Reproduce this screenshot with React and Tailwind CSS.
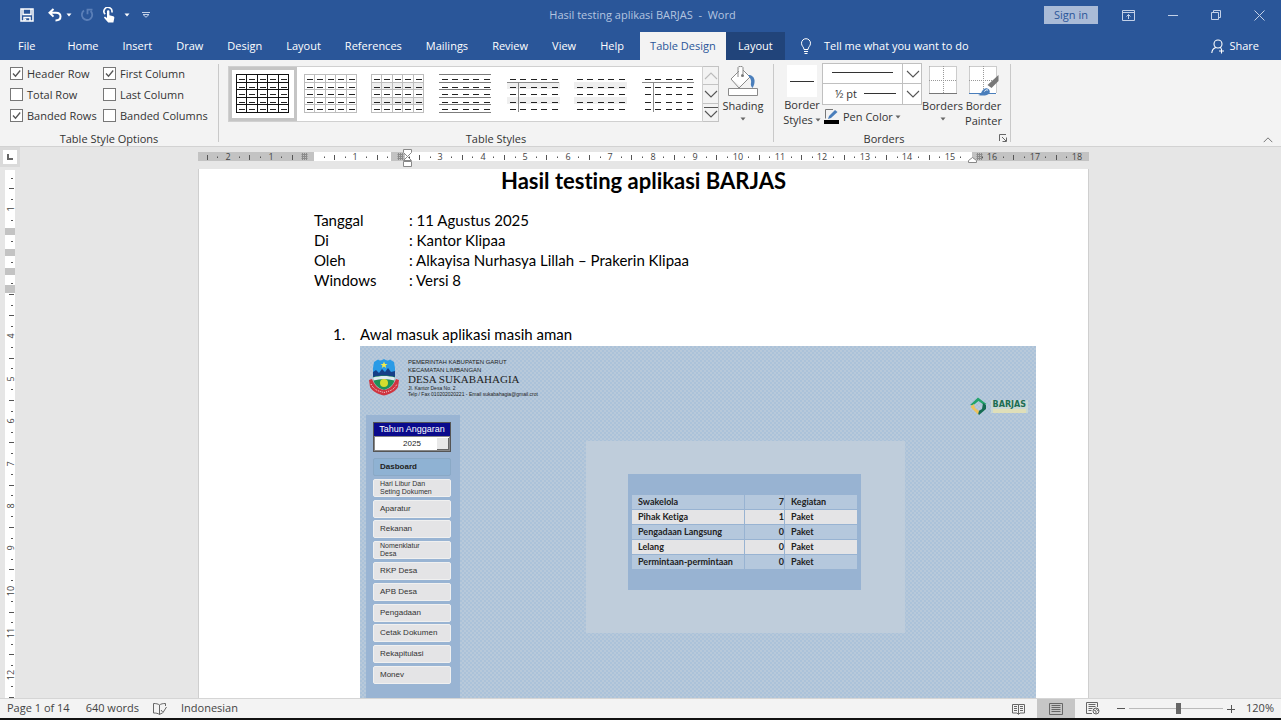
import { useState } from 'react'
import clsx from 'clsx'

const tabs = ['Home', 'Insert', 'Draw', 'Design', 'Layout', 'References', 'Mailings', 'Review', 'View', 'Help']

const styleOptions = [
  { name: 'Header Row', checked: true },
  { name: 'First Column', checked: true },
  { name: 'Total Row', checked: false },
  { name: 'Last Column', checked: false },
  { name: 'Banded Rows', checked: true },
  { name: 'Banded Columns', checked: false },
]

const tableStyles = [
  { name: 'Table Grid', grid: '#111111' },
  { name: 'Table Grid Light', grid: '#bdbdbd' },
  { name: 'Grid Table 1 Light', grid: '#bdbdbd', banded: true },
  { name: 'Plain Table 2', rules: true },
  { name: 'Plain Table 3', banded: true, firstColumn: true },
  { name: 'Plain Table 4', banded: true },
  { name: 'Plain Table 5', firstColumn: true },
]

const details = [
  { label: 'Tanggal', value: '11 Agustus 2025' },
  { label: 'Di', value: 'Kantor Klipaa' },
  { label: 'Oleh', value: 'Alkayisa Nurhasya Lillah – Prakerin Klipaa' },
  { label: 'Windows', value: 'Versi 8' },
]

const menu = [
  { name: 'Hari Libur Dan\nSeting Dokumen', small: true },
  { name: 'Aparatur' },
  { name: 'Rekanan' },
  { name: 'Nomenklatur\nDesa', small: true },
  { name: 'RKP Desa' },
  { name: 'APB Desa' },
  { name: 'Pengadaan' },
  { name: 'Cetak Dokumen' },
  { name: 'Rekapitulasi' },
  { name: 'Monev' },
]

const summary = [
  { name: 'Swakelola', count: 7, unit: 'Kegiatan' },
  { name: 'Pihak Ketiga', count: 1, unit: 'Paket' },
  { name: 'Pengadaan Langsung', count: 0, unit: 'Paket' },
  { name: 'Lelang', count: 0, unit: 'Paket' },
  { name: 'Permintaan-permintaan', count: 0, unit: 'Paket' },
]

function Caret({ className }) {
  return (
    <svg viewBox="0 0 6 4" className={clsx('h-1 w-1.5', className)} fill="currentColor">
      <path d="M0.5 0.5h5L3 3.5z" />
    </svg>
  )
}

function Chevron({ up, className }) {
  return (
    <svg viewBox="0 0 14 8" className={clsx('h-2', className || 'w-3.5')} fill="none" stroke="currentColor" strokeWidth="1.1">
      <path d={up ? 'M1 7l6-6 6 6' : 'M1 1l6 6 6-6'} />
    </svg>
  )
}

function TitleBar() {
  return (
    <header className="flex h-[30px] shrink-0 items-center text-[#dbe5f3]">
      <div className="flex flex-1 items-center pl-5">
        <button type="button" aria-label="Save">
          <svg viewBox="0 0 14 14" className="h-3.5 w-3.5" fill="none" stroke="#fff" strokeWidth="1.5">
            <path d="M1 1h12v12H1z" />
            <path d="M3 1v5.500h8V1M4 13V9.5h6V13" />
            <path d="M5.5 10.5v2" />
          </svg>
        </button>
        <button type="button" aria-label="Undo" className="ml-3.5 flex items-center gap-1">
          <svg viewBox="0 0 14 14" className="h-3.5 w-3.5" fill="none" stroke="#fff" strokeWidth="2">
            <path d="M5.5 1L1.5 4.8l4 3.8M1.8 4.8H8c3 0 4.5 1.7 4.5 3.8S11 12.5 7.5 12.5" />
          </svg>
          <Caret className="text-white" />
        </button>
        <button type="button" aria-label="Repeat" className="ml-2">
          <svg viewBox="0 0 14 14" className="h-3.5 w-3.5" fill="none" stroke="#5b7fb8" strokeWidth="1.8">
            <path d="M4 2.6A5.2 5.2 0 1 0 10.6 3M7.5 6.2V1.6h5" />
          </svg>
        </button>
        <button type="button" aria-label="Touch mode" className="ml-2 flex items-center gap-2">
          <svg viewBox="0 0 14 16" className="h-4 w-3.5" fill="#fff">
            <path d="M3.2 7.2A4 4 0 1 1 9.8 5.5" fill="none" stroke="#fff" strokeWidth="1.600" />
            <path d="M5 4.3c0-1.500 2.400-1.500 2.400 0v4l3.8 1c.9.3 1.3.9 1.1 1.8L11.4 15.500H6.2L2.2 11c-.6-1 .6-1.700 1.400-1.100L5 11z" />
          </svg>
          <Caret className="text-white" />
        </button>
        <button type="button" aria-label="Customize Quick Access Toolbar" className="ml-3">
          <svg viewBox="0 0 8 6" className="h-1.5 w-2" fill="none" stroke="#c3d1e8">
            <path d="M0 .5h8M1 2.5h6L4 5.3z" />
          </svg>
        </button>
      </div>
      <p className="whitespace-pre text-[11px] text-[#b4c5e0]">Hasil testing aplikasi BARJAS  -  Word</p>
      <div className="flex flex-1 items-center justify-end pr-4">
        <button type="button" className="h-[18px] w-[54px] bg-[#aabbd7] text-[11px] leading-4 text-[#2a5699]">
          Sign in
        </button>
        <button type="button" aria-label="Ribbon Display Options" className="ml-6">
          <svg viewBox="0 0 13 11" className="h-[11px] w-[13px]" fill="none" stroke="#c3d1e8">
            <path d="M.5.5h12v10H.5zM.5 2.5h12M6.5 9V4.5M4.5 6.5l2-2 2 2" />
          </svg>
        </button>
        <button type="button" aria-label="Minimize" className="ml-[33px]">
          <svg viewBox="0 0 10 10" className="h-2.5 w-2.5" stroke="#c3d1e8">
            <path d="M0 5.5h10" />
          </svg>
        </button>
        <button type="button" aria-label="Restore" className="ml-[33px]">
          <svg viewBox="0 0 10 10" className="h-2.5 w-2.5" fill="none" stroke="#c3d1e8">
            <path d="M.5 2.5h7v7h-7zM2.5 2.5v-2h7v7h-2" />
          </svg>
        </button>
        <button type="button" aria-label="Close" className="ml-[33px]">
          <svg viewBox="0 0 11 11" className="h-[11px] w-[11px]" stroke="#c3d1e8">
            <path d="M.5.5l10 10M10.5.5l-10 10" />
          </svg>
        </button>
      </div>
    </header>
  )
}

function TabBar() {
  return (
    <nav className="flex h-[30px] shrink-0 items-end text-[11px] text-white">
      <div className="flex h-7 items-stretch">
        <button type="button" className="mr-2 pl-[18px] pr-3">File</button>
        {tabs.map((tab) => (
          <button key={tab} type="button" className="px-3">{tab}</button>
        ))}
        <button type="button" className="ml-1 w-[86px] bg-[#f3f3f3] text-[#2a5699]">Table Design</button>
        <button type="button" className="w-[59px] bg-[#21447a]">Layout</button>
        <button type="button" className="ml-[15px] flex items-center gap-3">
          <svg viewBox="0 0 12 16" className="h-4 w-3" fill="none" stroke="#fff">
            <path d="M4 11.5C4 9 1.5 8.300 1.500 5.200a4.500 4.500 0 0 1 9 0C10.500 8.300 8 9 8 11.500zM4 13.500h4M4.500 15.500h3" />
          </svg>
          Tell me what you want to do
        </button>
      </div>
      <button type="button" className="ml-auto mr-[22px] flex h-7 items-center gap-1">
        <svg viewBox="0 0 14 15" className="h-[15px] w-3.5" fill="none" stroke="#fff" strokeWidth="1.1">
          <circle cx="7" cy="5" r="4" />
          <path d="M.8 14C1 11 2.500 9.200 5 8.500M9 8.500l1.200.8M10.500 9.500v5M8 12h5" />
        </svg>
        Share
      </button>
    </nav>
  )
}

function StyleOption({ option }) {
  return (
    <label className="flex items-center gap-1">
      <span className="relative flex h-[13px] w-[13px]">
        <input
          type="checkbox"
          defaultChecked={option.checked}
          className="peer h-[13px] w-[13px] appearance-none border border-[#777] bg-white"
        />
        <svg
          viewBox="0 0 13 13"
          className="pointer-events-none invisible absolute inset-0 peer-checked:visible"
          fill="none"
          stroke="#555"
          strokeWidth="1.3"
        >
          <path d="M3 6.500l2.500 2.700L10.200 3.500" />
        </svg>
      </span>
      {option.name}
    </label>
  )
}

function TableThumb({ style }) {
  const steps = [0, 1, 2, 3, 4]
  const lines = [0, 1, 2, 3, 4, 5]
  return (
    <svg viewBox="0 0 53 39" className="h-[39px] w-[53px]" shapeRendering="crispEdges">
      {style.banded && <path d="M0 8h53v7H0zM0 23h53v7H0z" fill="#efefef" />}
      {style.grid && (
        <g stroke={style.grid} fill="none">
          {lines.map((i) => <path key={i} d={`M0 ${Math.round(i * 7.6) + 0.5}h53`} />)}
          {lines.map((i) => <path key={i} d={`M${Math.round(i * 10.4) + 0.5} 0v39`} />)}
        </g>
      )}
      {style.rules && (
        <g stroke="#7c7c7c">
          {lines.map((i) => <path key={i} d={`M0 ${Math.round(i * 7.6) + 0.5}h52`} />)}
        </g>
      )}
      {style.firstColumn && <path d="M0 8.500h52M11.500 8v30" stroke="#8a8a8a" />}
      <g stroke="#222">
        {steps.map((row) => steps.map((col) => (
          <path key={`${row}-${col}`} d={`M${Math.round(col * 10.4) + 3} ${Math.round(row * 7.5) + 5}.5h6`} />
        )))}
      </g>
    </svg>
  )
}

function Group({ label, className, children }) {
  return (
    <section className={clsx('relative flex flex-col justify-between', className)}>
      {children}
      <h2 className="text-center leading-[15px]">{label}</h2>
    </section>
  )
}

function Divider() {
  return <div className="mt-1 mb-1 w-px shrink-0 bg-[#c9c9c9]" />
}

function Ribbon() {
  const [selected, setSelected] = useState('Table Grid')

  return (
    <div className="flex h-[87px] shrink-0 border-b border-[#d2d2d2] bg-[#f3f3f3] text-[11px] text-[#333]">
      <Group label="Table Style Options" className="w-[218px]">
        <div className="grid grid-cols-[93px_1fr] pt-[3px] pl-2.5 leading-[21px] whitespace-nowrap">
          {styleOptions.map((option) => <StyleOption key={option.name} option={option} />)}
        </div>
      </Group>
      <Divider />

      <Group label="Table Styles" className="w-[554px]">
        <div className="flex pt-1.5 pl-[9px]">
          <div className="flex h-14 w-[475px] border border-[#d0d0d0] bg-white">
            {tableStyles.map((style) => (
              <button
                key={style.name}
                type="button"
                aria-label={style.name}
                onClick={() => setSelected(style.name)}
                className={clsx(
                  'flex flex-1 items-start justify-center border-[3px] pt-1',
                  selected === style.name ? 'border-[#c5c5c5]' : 'border-transparent'
                )}
              >
                <TableThumb style={style} />
              </button>
            ))}
          </div>
          <div className="flex h-14 w-4 flex-col border border-l-0 border-[#c3c3c3]">
            <button type="button" aria-label="Previous row" className="flex flex-1 items-center justify-center border-b border-[#c3c3c3] text-[#bbb]">
              <Chevron up />
            </button>
            <button type="button" aria-label="Next row" className="flex flex-1 items-center justify-center border-b border-[#c3c3c3] text-[#555]">
              <Chevron />
            </button>
            <button type="button" aria-label="More" className="flex flex-1 flex-col items-center justify-center gap-0.5 text-[#555]">
              <span className="h-px w-3.5 bg-[#555]" />
              <Chevron />
            </button>
          </div>
          <button type="button" className="flex w-12 flex-col items-center leading-[15px]">
            <svg viewBox="0 0 32 32" className="h-8 w-8" fill="none" stroke="#8a8a8a">
              <path d="M14 1l9 9-9 10L4 13z" fill="#fff" stroke="none" />
              <path d="M11 11V1.500c0-1.600 5-1.600 5 0V8M12 5L4 13l8 9L23 11 16 4" />
              <circle cx="15.500" cy="9.500" r="1.500" fill="#777" stroke="none" />
              <path d="M21 9c4 0 6 2 6.500 5 .3 3-.3 5-2 8-1.500-2-2-3-1.500-5s0-4-3-8z" fill="#4a7ebb" stroke="none" />
              <path d="M1.500 22.500h29v7h-29z" fill="#fff" />
            </svg>
            Shading
            <Caret className="mt-1 text-[#666]" />
          </button>
        </div>
      </Group>
      <Divider />

      <Group label="Borders" className="w-[236px] pr-4">
        <div className="-mr-4 flex pt-1 pl-2">
          <button type="button" className="flex w-10 flex-col items-center pt-px leading-[15px]">
            <span className="flex h-8 w-[30px] items-center bg-white px-[3px]">
              <span className="h-px flex-1 bg-[#333]" />
            </span>
            Border
            <span className="flex items-center gap-0.5">Styles <Caret className="text-[#666]" /></span>
          </button>
          <div className="-mt-px flex w-[100px] flex-col text-[#555]">
            <div className="relative">
              <select aria-label="Line Style" className="block h-[21px] w-full appearance-none border border-[#c0c0c0] bg-white">
                <option aria-label="Single line" />
              </select>
              <span className="pointer-events-none absolute top-[9px] left-2.5 h-px w-[61px] bg-[#333]" />
              <span className="pointer-events-none absolute inset-y-0 right-0 flex w-5 items-center justify-center border-l border-[#c0c0c0]">
                <Chevron />
              </span>
            </div>
            <div className="relative -mt-px">
              <select aria-label="Line Weight" className="block h-[22px] w-full appearance-none border border-[#c0c0c0] bg-white pl-3 text-[#333]">
                <option>½ pt</option>
              </select>
              <span className="pointer-events-none absolute top-2.5 left-[42px] h-px w-8 bg-[#333]" />
              <span className="pointer-events-none absolute inset-y-0 right-0 flex w-5 items-center justify-center border-l border-[#c0c0c0]">
                <Chevron />
              </span>
            </div>
            <button type="button" className="mt-1 flex items-center gap-1 pl-0.5 leading-[15px] whitespace-nowrap text-[#333]">
              <svg viewBox="0 0 15 15" className="h-[15px] w-[15px]">
                <path d="M9 .500H1.500v9" fill="none" stroke="#777" />
                <path d="M4 10l1-3 6-6 2.500 2-6.500 6z" fill="#4a7ebb" />
                <path d="M0 11h15v4H0z" fill="#000" />
              </svg>
              <span className="flex items-center gap-0.5">Pen Color <Caret className="text-[#666]" /></span>
            </button>
          </div>
          <button type="button" className="flex w-[41px] flex-col items-center pt-0.5 leading-[15px]">
            <svg viewBox="0 0 28 28" className="mb-1 h-7 w-7">
              <path d="M0 0h28v28H0z" fill="#fff" />
              <path d="M.5.5h27v27M.5.5v27M14.500 0v27M0 14.500h28" fill="none" stroke="#999" strokeDasharray="1 1" />
              <path d="M0 27.500h28" stroke="#777" />
            </svg>
            Borders
            <Caret className="mt-1 text-[#666]" />
          </button>
          <button type="button" className="flex w-[41px] flex-col items-center pt-0.5 leading-[15px]">
            <svg viewBox="0 0 30 30" className="mb-0.5 h-[30px] w-[30px]">
              <path d="M0 0h28v28H0z" fill="#fff" />
              <path d="M.5.5h27v27M.5.5v27M14.500 0v27M0 14.500h28" fill="none" stroke="#999" strokeDasharray="1 1" />
              <path d="M0 27.500h27" stroke="#4a7ebb" />
              <path d="M29.500 9v6l-7 7-4-3z" fill="#777" />
              <path d="M9 29c4-1 3-4 6-6 3-2 7 1 5.500 4-2 3-7 3-11.500 2z" fill="#4a7ebb" />
              <path d="M15.500 25.500c1-2 3-2 3.500-1" fill="none" stroke="#fff" />
            </svg>
            Border
            <br />
            Painter
          </button>
        </div>
        <button type="button" aria-label="Borders and Shading" className="absolute right-[3px] bottom-1">
          <svg viewBox="0 0 8 8" className="h-2 w-2" fill="none" stroke="#666">
            <path d="M.5 7V.5H7M3 3l4 4M7.500 3.500v4h-4" />
          </svg>
        </button>
      </Group>
      <Divider />

      <button type="button" aria-label="Collapse the Ribbon" className="mt-auto mr-2 mb-0.5 ml-auto text-[#555]">
        <Chevron up className="w-2.5" />
      </button>
    </div>
  )
}

// One centimetre is about 42.4 units on both rulers, numbered from the page margin.
function HorizontalRuler() {
  const quarters = Array.from({ length: 84 }, (_, i) => i - 11)
  const at = (cm) => Math.round(116 + cm * 42.45)
  const covered = (x) => (x > 103 && x < 117) || (x > 194 && x < 212) || (x > 770 && x < 785)
  return (
    <svg viewBox="1 -1 891 20" className="h-5 w-full shrink-0" preserveAspectRatio="xMinYMin">
      <path d="M0 4h892v9H0z" fill="#fff" />
      <path d="M0 4h117v9H0zM194 4h14v9h-14zM775 4h117v9H775z" fill="#c3c3c3" />
      {quarters.map((q) => {
        const cm = q / 4
        const x = at(cm)
        if (x > 890 || covered(x)) return null
        if (q % 4 === 0) {
          return (
            <text key={q} x={x} y="12" textAnchor="middle" fontSize="9" fill="#444">{Math.abs(cm)}</text>
          )
        }
        return <path key={q} d={q % 2 === 0 ? `M${x}.5 7v5` : `M${x}.5 8.500v1.500`} stroke="#555" />
      })}
      {[105, 201, 780].map((x) => (
        <path key={x} d={`M${x}.5 5v7m2-7v7m2-7v7M${x - 0.5} 6.500h6m-6 2h6m-6 2h6`} stroke="#8a8a8a" />
      ))}
      <path d="M206.500 1.500h8v3l-4 4-4-4zM210.500 8.500l4 4h-8zM206.500 13.500h8v5h-8z" fill="#fff" stroke="#888" />
      <path d="M775.500 9.500l4 3v2h-8v-2z" fill="#fff" stroke="#888" />
    </svg>
  )
}

function VerticalRuler() {
  const quarters = Array.from({ length: 50 }, (_, i) => i + 1)
  const covered = [[58, 7], [79, 7], [98, 7], [115, 8]]
  return (
    <svg viewBox="0 0 10 528" className="h-[528px] w-2.5 overflow-visible">
      <path d="M0 0h10v528H0z" fill="#fff" />
      {quarters.map((q) => {
        const y = Math.round(-3 + q * 10.590)
        if (q === 8) return null
        if (q % 4 === 0 && q !== 12) {
          return (
            <text key={q} transform={`translate(9 ${y}) rotate(-90)`} textAnchor="middle" fontSize="9" fill="#444">{q / 4}</text>
          )
        }
        return <path key={q} d={q % 2 === 0 ? `M4 ${y}.5h5` : `M6 ${y}.5h2`} stroke="#555" />
      })}
      {covered.map(([y, h]) => <path key={y} d={`M0 ${y}h10v${h}H0z`} fill="#c3c3c3" />)}
    </svg>
  )
}

function VillageCrest() {
  return (
    <svg viewBox="0 0 32 38" className="h-[38px] w-8">
      <path d="M6 4l4-2.500c2 1.500 4 1 6-.5 2 1.500 4 2 6 .5L26 4l1 6v10H5V10z" fill="#2a9be6" />
      <path d="M5 14l3-2 3 3 3-4 3 3 3-4 3 4 4-1v7H5z" fill="#153f86" />
      <path d="M5 19c7-2 15-2 22 0 0 6-4 11-11 13C9 30 5 25 5 19z" fill="#1f9158" />
      <path d="M5 19.500c7-2 15-2 22 0l-.5 3c-7-2-14-2-21 0z" fill="#dfeaf0" />
      <circle cx="16" cy="25" r="4" fill="#d3dd2e" />
      <path d="M16 3.500l1 2.500h2.500l-2 1.500.700 2.500-2.200-1.500-2.200 1.500.7-2.500-2-1.500H15z" fill="#f4ec4a" />
      <path d="M1 22l3-1c3 7 6 10 12 11 6-1 9-4 12-11l3 1-1 7c-3 5-8 7-14 8.500C10 36 5 34 2 29z" fill="#cf3540" />
      <path d="M3 26c3 6 7 7 13 8.500 6-1.500 10-2.500 13-8.500" fill="none" stroke="#f3d7d9" strokeDasharray="1 1" />
    </svg>
  )
}

function BarjasLogo() {
  return (
    <div className="flex items-center gap-1">
      <svg viewBox="0 0 18 18" className="h-[18px] w-[18px]">
        <path d="M1 8l8-7.500L17.500 7 15 8 9.500 4 4 8.500z" fill="#23a36c" />
        <path d="M14 6l3 2v4l-7 6-2-3 5-3z" fill="#156b52" />
        <path d="M2 9l3-2 1 4 4 3-1 3.500-7-7z" fill="#ecc35f" />
      </svg>
      <div className="bg-[#c8d8d5] px-0.5">
        <p className="font-['DejaVu_Sans',sans-serif] text-[8px] leading-[9px] font-bold text-[#1c6d52]">BARJAS</p>
        <div className="h-1 bg-[#dfdfb9]" />
      </div>
    </div>
  )
}

function VillageApp() {
  return (
    <div className="flex h-[376px] shrink-0 flex-col bg-[repeating-conic-gradient(#abc2d9_0%_25%,#b8c9da_0%_50%)] bg-[length:4px_4px] font-['Liberation_Sans',sans-serif] text-[#222]">
      <div className="flex h-[69px] shrink-0 justify-between pr-2 pl-2">
        <div className="flex gap-2 pt-3">
          <VillageCrest />
          <div className="text-[6px] leading-[8px]">
            <p>PEMERINTAH KABUPATEN GARUT</p>
            <p>KECAMATAN LIMBANGAN</p>
            <p className="font-['Liberation_Serif',serif] text-[11px] leading-[11px]">DESA SUKABAHAGIA</p>
            <p className="text-[5px] leading-[6px]">Jl. Kantor Desa No. 2</p>
            <p className="text-[5px] leading-[6px]">Telp / Fax 010202020221 - Email sukabahagia@gmail.crot</p>
          </div>
        </div>
        <div className="self-end">
          <BarjasLogo />
        </div>
      </div>

      <div className="flex min-h-0 flex-1">
        <aside className="ml-1.5 w-[94px] shrink-0 bg-[#99b4d3] pt-[7px] pr-[9px] pl-[7px]">
          <div className="border border-[#555] bg-white text-center">
            <label htmlFor="tahun" className="block bg-[#0a0a8c] text-[9px] leading-[13px] text-white">Tahun Anggaran</label>
            <div className="relative border border-[#888]">
              <select id="tahun" className="block h-[13px] w-full appearance-none text-center text-[8px] leading-[11px]">
                <option>2025</option>
              </select>
              <span className="pointer-events-none absolute right-0 bottom-0 h-3 w-3 border-r border-b border-[#666] bg-[#e8e8e8]" />
            </div>
          </div>
          <div className="mt-1.5 flex h-[226px] flex-col justify-between text-[8px] leading-[14px]">
            <button type="button" className="h-[18px] rounded-xs border border-[#8aa9c6] bg-[#8fb2d3] pl-1.5 text-left font-bold">Dasboard</button>
            {menu.map((item) => (
              <button
                key={item.name}
                type="button"
                className={clsx(
                  'h-[18px] rounded-xs border border-[#f0f0f0] bg-[#e4e4e6] pl-1.5 text-left whitespace-pre-line text-[#333]',
                  item.small && 'text-[7px] leading-[8px]'
                )}
              >
                {item.name}
              </button>
            ))}
          </div>
        </aside>

        <div className="flex-1 pt-[26px] pr-[131px] pl-[126px]">
          <div className="bg-[#bfcddb] pt-[33px] pr-11 pb-[43px] pl-[42px]">
            <div className="bg-[#98b3d2] px-[3px] pt-5 pb-5">
              <table className="w-full border-separate border-spacing-px font-['Lato',sans-serif] text-[9px] leading-[14px] font-bold">
                <tbody>
                  {summary.map((row) => (
                    <tr key={row.name} className="bg-[#b5c8dd] even:bg-[#e4e4e6]">
                      <td className="w-[112px] p-0 pl-1.5 whitespace-nowrap">{row.name}</td>
                      <td className="w-[39px] p-0 text-right">{row.count}</td>
                      <td className="p-0 pl-1.5">{row.unit}</td>
                    </tr>
                  ))}
                </tbody>
              </table>
            </div>
          </div>
        </div>
      </div>
    </div>
  )
}

function Workspace() {
  return (
    <main className="flex min-h-0 flex-1 overflow-hidden bg-[#e6e6e6]">
      <div className="w-5 shrink-0">
        <button type="button" aria-label="Tab selector" className="flex h-5 w-5 items-center justify-center border-[3px] border-[#dadada] bg-white">
          <svg viewBox="0 0 6 6" className="h-1.5 w-1.5" fill="none" stroke="#666" strokeWidth="2">
            <path d="M1 0v5h5" />
          </svg>
        </button>
        <div className="pt-[3px] pl-[5px]">
          <VerticalRuler />
        </div>
      </div>
      <div className="flex min-w-0 flex-1 justify-center pr-3.5">
        <div className="flex w-full max-w-[891px] flex-col">
          <HorizontalRuler />
          <article className="mt-0.5 min-h-0 flex-1 border-x border-[#cfcfcf] bg-white font-['Lato',sans-serif] text-[15px] leading-5 text-black [font-variant-ligatures:none]">
            <h1 className="text-center text-[22px] leading-6 font-bold">Hasil testing aplikasi BARJAS</h1>
            <dl className="mt-[17px] ml-[115px] grid grid-cols-[95px_1fr]">
              {details.map((item) => (
                <div key={item.label} className="contents">
                  <dt>{item.label}</dt>
                  <dd>: {item.value}</dd>
                </div>
              ))}
            </dl>
            <div className="mt-[34px] mr-[52px] ml-[134px] flex">
              <span className="w-[27px] shrink-0">1.</span>
              <div className="flex min-w-0 flex-1 flex-col gap-0.5">
                <p>Awal masuk aplikasi masih aman</p>
                <VillageApp />
              </div>
            </div>
          </article>
        </div>
      </div>
    </main>
  )
}

function StatusBar() {
  const [zoom, setZoom] = useState(120)

  return (
    <footer className="flex h-[22px] shrink-0 items-stretch border-t border-b-2 border-t-[#d5d5d5] border-b-[#111] bg-[#f3f3f3] text-[11px] text-[#444]">
      <div className="flex flex-1 items-center pl-[7px]">
        <span>Page 1 of 14</span>
        <span className="ml-4">640 words</span>
        <button type="button" aria-label="Proofing errors" className="ml-3.5">
          <svg viewBox="0 0 14 12" className="h-3 w-3.5" fill="none" stroke="#666">
            <path d="M6.500 11.500V2C5 .8 3 .5.500.500v9.500c2.500 0 4.500.3 6 1.500 1-.8 2-1.200 3-1.400M6.500 2C8 .8 10 .5 12.500.500V3M8 7l2 2.500L13.500 4" />
          </svg>
        </button>
        <span className="ml-3.5">Indonesian</span>
      </div>
      <button type="button" aria-label="Read Mode" className="flex w-[38px] items-center justify-center">
        <svg viewBox="0 0 13 12" className="h-3 w-[13px]" fill="none" stroke="#666">
          <path d="M6.500 11V1.500H.500V10h4.500l1.500 1.500L8 10h4.500V1.500h-6M2 3.500h3M2 5.500h3M2 7.500h3M8 3.500h3M8 5.500h3M8 7.500h3" />
        </svg>
      </button>
      <button type="button" aria-label="Print Layout" className="flex w-[38px] items-center justify-center bg-[#c6c6c6]">
        <svg viewBox="0 0 14 12" className="h-3 w-3.5" fill="none" stroke="#666">
          <path d="M.5.5h13v11H.500zM2.500 2.500h9M2.500 4.500h9M2.500 6.500h9M2.500 8.500h9" />
        </svg>
      </button>
      <button type="button" aria-label="Web Layout" className="flex w-9 items-center justify-center">
        <svg viewBox="0 0 14 13" className="h-[13px] w-3.5" fill="none" stroke="#666">
          <path d="M6 11.500H.500V.500h11V5M2.500 2.500h7M2.500 4.500h7M2.500 6.500h4M2.500 8.500h3" />
          <circle cx="10" cy="9" r="3" />
          <path d="M8 8l2 1v2.500M10 6.500l1.500 2L13 8" />
        </svg>
      </button>
      <div className="flex items-center pl-1.5">
        <button type="button" aria-label="Zoom Out" className="flex h-4 w-2 items-center">
          <span className="h-px w-2 bg-[#555]" />
        </button>
        <input
          type="range"
          aria-label="Zoom"
          min="10"
          max="220"
          value={zoom}
          onChange={(event) => setZoom(Number(event.target.value))}
          className="mx-1 h-3 w-[94px] appearance-none bg-[linear-gradient(#bbb,#bbb)] bg-[length:100%_1px] bg-center bg-no-repeat [&::-webkit-slider-thumb]:h-[11px] [&::-webkit-slider-thumb]:w-[5px] [&::-webkit-slider-thumb]:appearance-none [&::-webkit-slider-thumb]:bg-[#666]"
        />
        <button type="button" aria-label="Zoom In">
          <svg viewBox="0 0 8 8" className="h-2 w-2" stroke="#555">
            <path d="M0 4.500h8M4.500 0v8" />
          </svg>
        </button>
        <span className="w-[46px] pr-[7px] text-right">{zoom}%</span>
      </div>
    </footer>
  )
}

export default function App() {
  return (
    <div className="flex h-screen flex-col overflow-hidden bg-[#2a5699] font-['Open_Sans',sans-serif]">
      <TitleBar />
      <TabBar />
      <Ribbon />
      <Workspace />
      <StatusBar />
    </div>
  )
}
